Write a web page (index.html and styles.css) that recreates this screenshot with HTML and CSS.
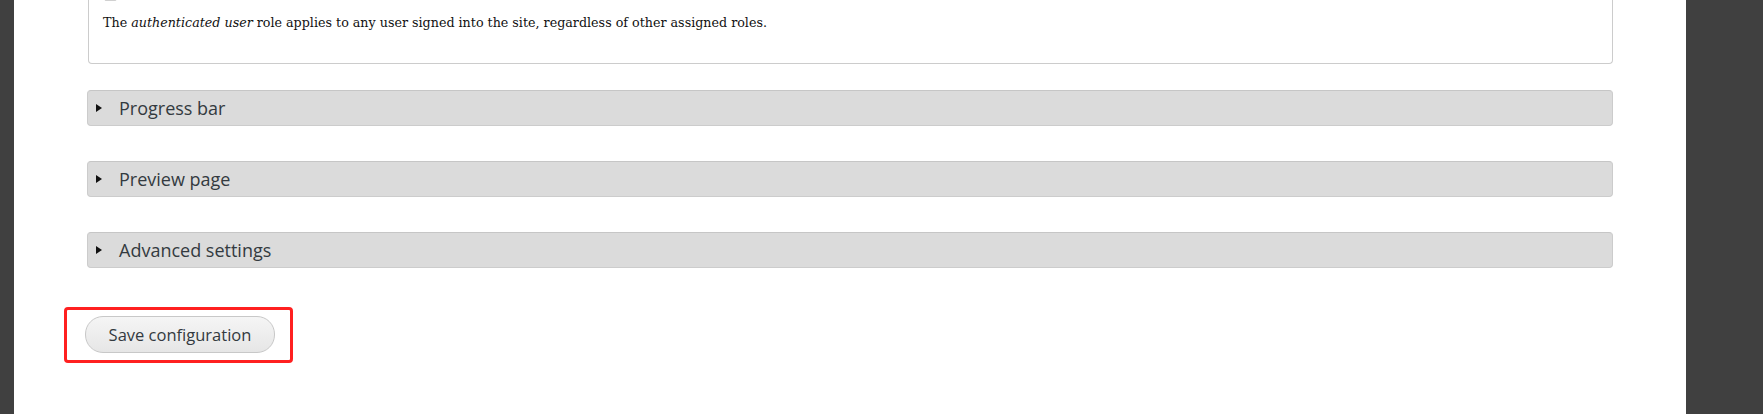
FILE: index.html
```html
<!DOCTYPE html>
<html lang="en">
<head>
<meta charset="utf-8">
<title>Settings</title>
<link rel="stylesheet" href="styles.css">
</head>
<body>
<div class="layout">
  <div class="side side-left"></div>
  <main class="main">
    <div class="scroll">
      <fieldset class="roles">
        <div class="check-row"><span class="checkbox"></span></div>
        <p class="desc">The <em>authenticated user</em> role applies to any user signed into the site, regardless of other assigned roles.</p>
      </fieldset>
      <details class="collapse"><summary><span class="tri"></span>Progress bar</summary></details>
      <details class="collapse"><summary><span class="tri"></span>Preview page</summary></details>
      <details class="collapse"><summary><span class="tri"></span>Advanced settings</summary></details>
      <div class="actions">
        <div class="highlight">
          <button class="btn" type="button">Save configuration</button>
        </div>
      </div>
    </div>
  </main>
  <div class="side side-right"></div>
</div>
</body>
</html>
```
FILE: styles.css
```css
html, body {
  margin: 0;
  padding: 0;
  height: 100%;
  background: #ffffff;
}
.layout {
  display: flex;
  height: 414px;
  overflow: hidden;
}
.side {
  background: #404040;
  flex: none;
}
.side-left { width: 14px; }
.side-right { width: 77px; }
.main {
  flex: 1;
  background: #ffffff;
  overflow: hidden;
  padding: 0 73px 0 73px;
}
.scroll {
  margin-top: -12px;
}
.roles {
  margin: 0 0 0 1px;
  border: 1px solid #cccccc;
  border-top: none;
  border-radius: 0 0 4px 4px;
  padding: 0 14px 14px 14px;
  height: 76px;
  box-sizing: border-box;
}
.check-row {
  height: 16px;
}
.checkbox {
  display: block;
  width: 13px;
  height: 13px;
  margin-left: 1px;
  border: 1px solid #d0d0d0;
  border-radius: 2px;
  background: #e6e6e6;
  box-sizing: border-box;
}
.desc {
  margin: 10px 0 0 0;
  font-family: "DejaVu Serif", Georgia, serif;
  font-size: 12.7px;
  color: #111111;
  line-height: 18px;
}
.collapse {
  margin: 26px 0 0 0;
  height: 36px;
  box-sizing: border-box;
  background: #dbdbdb;
  border: 1px solid #cccccc;
  border-top-color: #c6c6c6;
  border-radius: 4px;
}
.collapse + .collapse { margin-top: 35px; }
.collapse summary {
  list-style: none;
  display: flex;
  align-items: center;
  height: 34px;
  padding-left: 8px;
  font-family: "Open Sans", "DejaVu Sans", sans-serif;
  font-size: 18px;
  color: #333a40;
  cursor: pointer;
}
.collapse summary::-webkit-details-marker { display: none; }
.tri {
  width: 0;
  height: 0;
  border-top: 4px solid transparent;
  border-bottom: 4px solid transparent;
  border-left: 6px solid #111111;
  margin-right: 17px;
}
.actions {
  margin-top: 39px;
  margin-left: -23px;
}
.highlight {
  display: inline-block;
  border: 3px solid #ff2020;
  border-radius: 4px;
  padding: 6px 15px 7px 18px;
}
.btn {
  display: block;
  width: 190px;
  height: 37px;
  border: 1px solid #c8c8c8;
  border-radius: 18px;
  background: linear-gradient(#f5f5f5, #e6e6e6);
  font-family: "Open Sans", "DejaVu Sans", sans-serif;
  font-size: 16.5px;
  color: #333a40;
  padding: 0;
}
```
